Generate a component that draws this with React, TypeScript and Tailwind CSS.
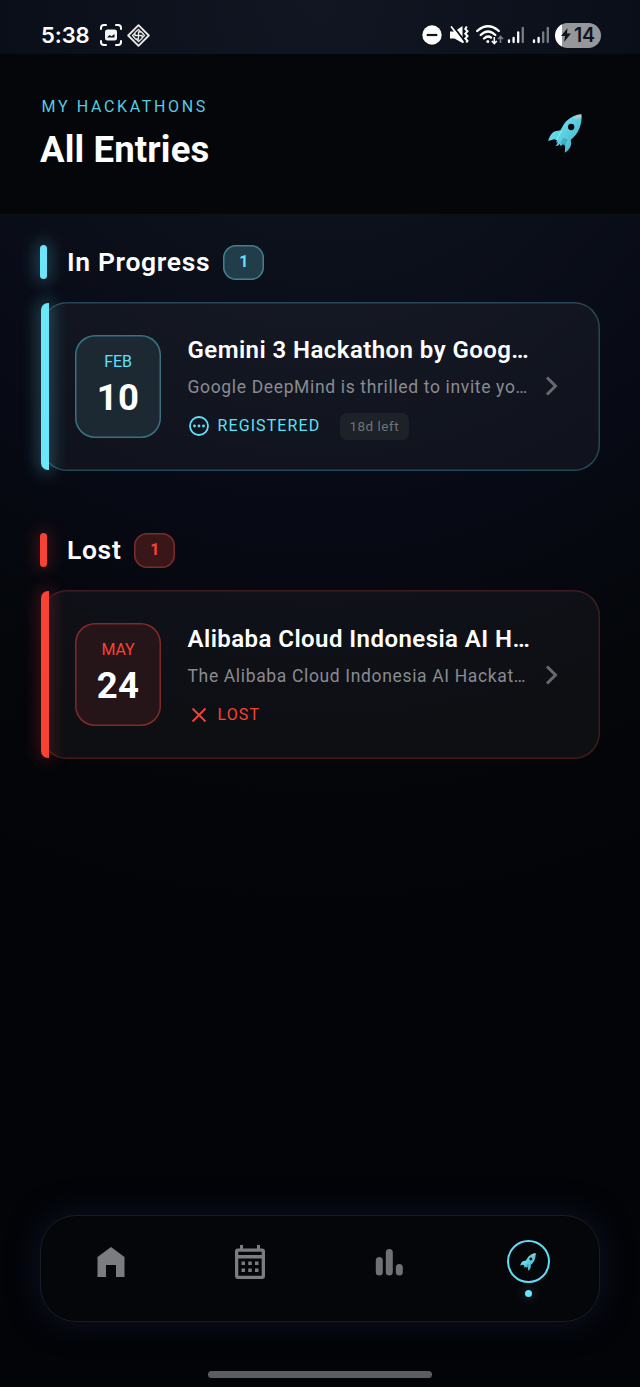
import React from "react";

type Tone = "cyan" | "red";

const tones = {
  cyan: {
    text: "text-[#5fe0f7]",
    bar: "bg-[#6be6fb] shadow-[0_0_16px_4px_rgba(107,230,251,0.25)]",
    card: "shadow-[inset_0_0_0_1.5px_#264651]",
    box: "bg-[#1c2932] shadow-[inset_0_0_0_1.5px_#38717f]",
    badge: "bg-[#223d4a] shadow-[inset_0_0_0_1.5px_#40818f]",
  },
  red: {
    text: "text-[#f94236]",
    bar: "bg-[#f94236] shadow-[0_0_16px_4px_rgba(249,66,54,0.2)]",
    card: "shadow-[inset_0_0_0_1.5px_#431a1d]",
    box: "bg-[#251518] shadow-[inset_0_0_0_1.5px_#7e2a29]",
    badge: "bg-[#391719] shadow-[inset_0_0_0_1.5px_#7c2c2b]",
  },
};

function Rocket({ className, gradientId }: { className: string; gradientId: string }) {
  return (
    <svg viewBox="54 42 101 117" className={className} aria-hidden="true">
      <defs>
        <linearGradient id={gradientId} x1="0" y1="0" x2="1" y2="1">
          <stop offset="0" stopColor="#7be8f8" />
          <stop offset="0.5" stopColor="#5bcfe2" />
          <stop offset="1" stopColor="#43acc2" />
        </linearGradient>
      </defs>
      <path
        fill={`url(#${gradientId})`}
        d="M153 43C137 44 121 51 108 64C101 71 96 82 91 91L75 94C65 97 58 109 54 123L72 118L81 121L77 128L83 126L79 135L76 138L83 137L88 132L92 138L99 132L105 137L104 158C115 151 122 142 123 131L122 119C133 111 144 98 149 82C153 69 156 56 153 43Z"
      />
      <path d="M128 53C137 47 145 44 153 43C154 47 154 50 153 53C147 54 141 55 136 58Z" fill="#b3c9cf" />
      <path d="M100 113L91 130L104 137L112 119Z" fill="#3394aa" opacity=".55" />
      <path d="M95 91C88 103 83 112 80 120" fill="none" stroke="#8ff0fc" strokeWidth="3" />
      <circle cx="123" cy="81" r="9.5" fill="#08090e" />
    </svg>
  );
}

function StatusBar() {
  return (
    <div className="flex h-[54px] items-start">
      <div className="mt-[22px] ml-[41px] flex h-[26px] items-center">
        <span className="w-[59px] font-['Inter'] text-[22px] leading-[26px] font-semibold tracking-[-0.1px]">5:38</span>
        <svg className="h-[22px] w-[22px]" viewBox="0 0 22 22" fill="none" stroke="#fff" strokeWidth="2" strokeLinecap="round">
          <path d="M1 5V4Q1 1 4 1H6M16 1h2q3 0 3 3v1M21 17v1q0 3-3 3h-2M6 21H4q-3 0-3-3v-1" />
          <rect x="5" y="5.5" width="12" height="11" rx="2.5" fill="#f5f5f5" stroke="none" />
          <path d="M7 13.5l2.5-2.5 2 1.2L14.5 10v3.5Z" fill="#10141e" stroke="none" />
        </svg>
        <svg className="ml-[5px] h-[23px] w-[23px]" viewBox="0 0 23 23" fill="none" stroke="#e8e8e8">
          <path d="M11.5 1.2L21.800 11.5L11.5 21.800L1.2 11.5Z" strokeWidth="1.9" strokeLinejoin="round" />
          <path d="M11.5 5.5L14 8H11.5V11.500H8V8.500ZM17.500 11.500L15 14V11.500H11.500V8H14.500ZM11.500 17.500L9 15H11.500V11.500H15V14.500ZM5.500 11.500L8 9V11.500H11.500V15H8.500Z" strokeWidth="1.300" />
        </svg>
      </div>
      <div className="mt-[22px] mr-[39px] ml-auto flex h-[26px] items-center">
        <svg className="h-5 w-5" viewBox="0 0 20 20">
          <circle cx="10" cy="10" r="9.7" fill="#fff" />
          <path d="M4.7 10h10.6" stroke="#10141e" strokeWidth="2.2" />
        </svg>
        <svg className="ml-2 h-5 w-5" viewBox="0 0 20 20" fill="none" stroke="#fff">
          <path d="M0 6.500h4.500L12.500 1v17L4.500 13.500H0Z" fill="#fff" stroke="none" />
          <path d="M2.500 .3L14 15.500" stroke="#0e121c" strokeWidth="2" />
          <path d="M1.500 2L13 17" strokeWidth="1.800" strokeLinecap="round" />
          <path d="M16.800 1.500l-1.500 2.400 2.200 2.400-2.200 2.400 2.200 2.400-2.200 2.400 2.200 2.400-1.200 1.600" strokeWidth="2" />
        </svg>
        <svg className="ml-[6px] h-5 w-7" viewBox="0 0 28 20" fill="none" stroke="#fff" strokeWidth="2.3">
          <path d="M1.200 6Q12-3.500 22.800 6M4.700 10Q12 3 19.300 10M8 13.500Q11.500 10.200 15 12.500" strokeLinecap="round" />
          <circle cx="11.800" cy="16.500" r="1.500" fill="#fff" stroke="none" />
          <path d="M18.300 12v6.500M15.800 16l2.500 2.500 2.500-2.500" strokeWidth="1.600" />
          <path d="M24.500 18v-6.500M22 14l2.500-2.500 2.500 2.500" stroke="#797c83" strokeWidth="1.600" />
        </svg>
        <svg className="ml-[3px] h-[18px] w-[18px]" viewBox="0 0 18 18" strokeWidth="2.300" strokeLinecap="round">
          <path d="M2 16v-1.700M6.600 16v-4M11.200 16V6.500" stroke="#fff" />
          <path d="M15.800 16V2" stroke="#797c83" />
        </svg>
        <svg className="ml-[7px] h-[18px] w-[18px]" viewBox="0 0 18 18" strokeWidth="2.300" strokeLinecap="round">
          <path d="M2 16v-1.700M6.600 16v-4" stroke="#fff" />
          <path d="M11.200 16V6.500M15.800 16V2" stroke="#797c83" />
        </svg>
        <div className="ml-[5px] flex h-[25px] w-[46px] items-center overflow-hidden rounded-full bg-[linear-gradient(90deg,#fff_0_7px,#96979b_7px)] pl-[6px] text-[#10141e]">
          <svg className="h-[14px] w-[10px]" viewBox="0 0 10 14">
            <path d="M6.500 0L0 8h4L3 14l7-8.500H6Z" fill="currentColor" />
          </svg>
          <span className="ml-[3px] font-['Inter'] text-[19.500px] leading-6 font-semibold tracking-[-0.3px]">14</span>
        </div>
      </div>
    </div>
  );
}

function Section({ title, tone, className }: { title: string; tone: Tone; className: string }) {
  const t = tones[tone];
  return (
    <div className={`ml-10 flex h-9 items-center ${className}`}>
      <div className={`h-[34px] w-[7px] rounded-full ${t.bar}`} />
      <h2 className="ml-5 text-[26.5px] leading-9 font-semibold tracking-[0.65px]">{title}</h2>
      <span className={`ml-[13px] flex h-[35px] w-[41px] items-center justify-center rounded-[13px] text-[16px] font-bold ${t.badge} ${t.text}`}>1</span>
    </div>
  );
}

interface EntryProps {
  tone: Tone;
  month: string;
  day: string;
  title: string;
  description: string;
  status: string;
  left?: string;
}

function Entry({ tone, month, day, title, description, status, left }: EntryProps) {
  const t = tones[tone];
  return (
    <article className={`relative mr-10 ml-[41px] flex h-[169px] items-center rounded-[26px] bg-white/[0.038] pl-[34px] ${t.card}`}>
      <div className={`absolute top-[1px] bottom-[1px] left-0 w-[7.5px] rounded-l-[7px] ${t.bar}`} />
      <div className={`flex h-[103px] w-[86px] flex-col items-center rounded-[20px] pt-[15px] ${t.box}`}>
        <span className={`text-[16px] leading-6 tracking-[-0.1px] ${t.text}`}>{month}</span>
        <span className="mt-[3px] text-[36.500px] leading-[42px] font-bold tracking-[0.4px]">{day}</span>
      </div>
      <div className="ml-[26.500px] h-[126px] w-[350px] whitespace-nowrap">
        <h3 className="mt-[11px] text-[24px] leading-8 font-semibold tracking-[0.44px]">{title}</h3>
        <p className="mt-[9px] text-[17.500px] leading-6 tracking-[0.65px] text-[#898b90]">{description}</p>
        <div className={`mt-[14px] flex h-[26px] items-center ${t.text}`}>
          <svg className="ml-[1px] h-5 w-5" viewBox="0 0 20 20" fill="none" stroke="currentColor" strokeWidth="1.800">
            {tone === "cyan" ? (
              <>
                <circle cx="10" cy="10" r="9" />
                <g fill="currentColor" stroke="none">
                  <circle cx="5.500" cy="10" r="1.400" />
                  <circle cx="10" cy="10" r="1.400" />
                  <circle cx="14.500" cy="10" r="1.400" />
                </g>
              </>
            ) : (
              <path d="M3.500 3.500l13 13M16.500 3.500L3.500 16.500" />
            )}
          </svg>
          <span className="ml-[9px] text-[16px] leading-6 tracking-[1.100px]">{status}</span>
          {left && (
            <span className="ml-[19.500px] flex h-[27px] w-[69px] items-center justify-center rounded-[7px] bg-[#1d2128] pt-px text-[13.500px] tracking-[0.500px] text-[#6f7379]">
              {left}
            </span>
          )}
        </div>
      </div>
      <svg className="ml-[7px] h-5 w-[14px]" viewBox="0 0 14 20" fill="none" stroke="#67696e" strokeWidth="3">
        <path d="M2 1.500L10.500 10L2 18.500" />
      </svg>
    </article>
  );
}

function BottomNav() {
  return (
    <nav className="mx-10 mt-auto mb-[49px] flex h-[107px] shrink-0 rounded-[36px] border border-[#191b25] bg-[#050609] shadow-[0_0_28px_4px_rgba(18,25,52,0.5)]">
      <div className="flex flex-1 justify-center pt-[29px]">
        <svg className="h-[34px] w-[34px]" viewBox="0 0 34 34" fill="#7b7c7f">
          <path d="M3.500 32V12L17 2l13.500 10v20h-8.500V20H12v12Z" />
        </svg>
      </div>
      <div className="flex flex-1 justify-center pt-[29px]">
        <svg className="h-[34px] w-[30px]" viewBox="0 0 30 34" fill="#7b7c7f">
          <path fillRule="evenodd" d="M5 0H8V3.500H22V0H25V3.500H27Q30 3.500 30 6.500V31Q30 34 27 34H3Q0 34 0 31V6.500Q0 3.500 3 3.500H5ZM3.300 6.700V10H26.700V6.700ZM3.300 13.500V30.700H26.700V13.500Z" />
          <path d="M6.500 16.500h3.500v3.500H6.500zM13.250 16.500h3.500v3.500h-3.500zM20 16.500h3.500v3.500H20zM6.500 23.500h3.500v3.500H6.500zM13.250 23.500h3.500v3.500h-3.500zM20 23.500h3.500v3.500H20z" />
        </svg>
      </div>
      <div className="flex flex-1 justify-center pt-[32px]">
        <svg className="h-7 w-7" viewBox="0 0 28 28" fill="#707173">
          <rect x=".800" y="9" width="7" height="18.500" rx="3.500" />
          <rect x="10.800" y="1" width="7" height="26.500" rx="3.500" />
          <rect x="20.800" y="16" width="7" height="11.500" rx="3.500" />
        </svg>
      </div>
      <div className="flex flex-1 flex-col items-center pt-[24px] pr-px">
        <div className="flex h-[43px] w-[43px] items-center justify-center rounded-full border-2 border-[#5fddf3]">
          <Rocket className="mr-px h-[18px] w-4" gradientId="rocket-nav" />
        </div>
        <div className="mt-[7px] h-[7px] w-[7px] rounded-full bg-[#6be6fb] shadow-[0_0_8px_4px_rgba(107,230,251,0.1)]" />
      </div>
    </nav>
  );
}

export default function App() {
  return (
    <div className="flex h-[1387px] w-[640px] flex-col overflow-hidden bg-[#030408] bg-[radial-gradient(ellipse_900px_950px_at_50%_0%,#111622_0%,#0c101b_28%,#070a14_55%,#04060a_78%,#030408_100%)] font-['Roboto',sans-serif] text-white">
      <StatusBar />
      <header className="flex h-[161px] shrink-0 justify-between border-b border-[#0e1016] bg-[#050609]">
        <div className="ml-10">
          <p className="mt-[41px] ml-[1.500px] text-[16px] leading-6 tracking-[2.650px] text-[#58cbe0]">MY HACKATHONS</p>
          <h1 className="mt-[8px] text-[36.500px] leading-[46px] font-bold tracking-[0.15px]">All Entries</h1>
        </div>
        <Rocket className="mt-[60px] mr-[58px] h-[39px] w-[34px]" gradientId="rocket-header" />
      </header>
      <main>
        <Section title="In Progress" tone="cyan" className="mt-[29px] mb-[21.500px]" />
        <Entry
          tone="cyan"
          month="FEB"
          day="10"
          title="Gemini 3 Hackathon by Goog…"
          description="Google DeepMind is thrilled to invite yo…"
          status="REGISTERED"
          left="18d left"
        />
        <Section title="Lost" tone="red" className="mt-[61.500px] mb-[22px]" />
        <Entry
          tone="red"
          month="MAY"
          day="24"
          title="Alibaba Cloud Indonesia AI H…"
          description="The Alibaba Cloud Indonesia AI Hackat…"
          status="LOST"
        />
      </main>
      <BottomNav />
      <div className="mx-auto mb-[9px] h-[7px] w-[224px] shrink-0 rounded-full bg-[#5d5d5f]" />
    </div>
  );
}
